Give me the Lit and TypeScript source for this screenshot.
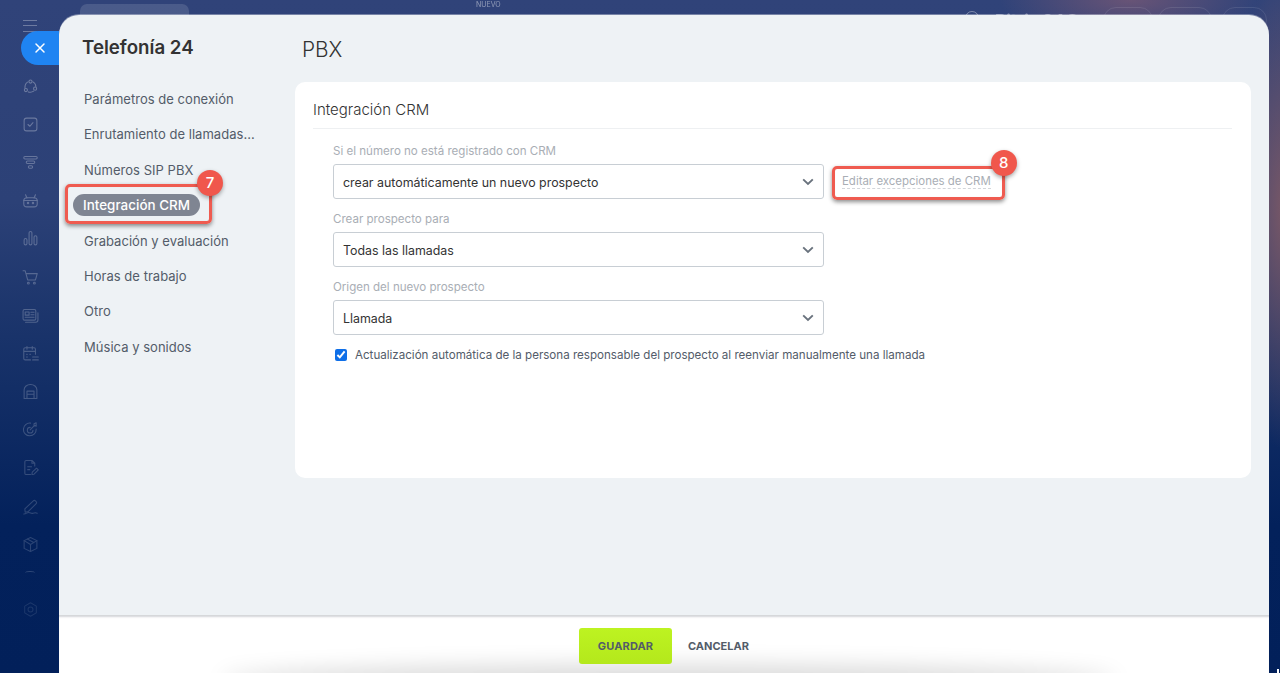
import { LitElement, html, css, svg } from "lit";
import { customElement } from "lit/decorators.js";

const chev = html`<svg class="chev" width="12" height="8" viewBox="0 0 12 8"><path d="M1.2 1.4 6 6l4.8-4.6" fill="none" stroke="#69727d" stroke-width="1.9"/></svg>`;

const icons = [
  svg`<circle cx="12" cy="5" r="2.2"/><circle cx="5.5" cy="17" r="2.2"/><circle cx="18.5" cy="15" r="2.2"/><path d="M8.5 5.5C5.5 7 4 10 4.2 14M9 19.6c2.5.8 5 .6 7.5-1M19.5 12c0-2.5-1.5-5-4-6.5"/>`,
  svg`<rect x="3" y="3" width="18" height="18" rx="3.5"/><path d="m8.5 12 2.5 2.500 4.500-5"/>`,
  svg`<rect x="2.5" y="3.5" width="19" height="3.5" rx="1.7"/><rect x="6" y="10" width="12" height="3.5" rx="1.7"/><rect x="9" y="16.5" width="6" height="3.5" rx="1.7"/>`,
  svg`<rect x="2.5" y="8" width="19" height="13" rx="4.5"/><path d="M7 8.500 5 4M17 8.500 19 4M2.500 12h19"/><circle cx="8.5" cy="15.500" r="1"/><circle cx="15.5" cy="15.500" r="1"/>`,
  svg`<rect x="3" y="12" width="4" height="9" rx="2"/><rect x="10" y="2" width="4" height="19" rx="2"/><rect x="17" y="8" width="4" height="13" rx="2"/>`,
  svg`<path d="M1.500 2.500h3l3.500 13h11l2.500-9H6"/><circle cx="9" cy="20" r="1.300"/><circle cx="17.5" cy="20" r="1.300"/>`,
  svg`<rect x="1.500" y="3.500" width="18" height="15" rx="2"/><path d="M22.500 8v10.500a3 3 0 0 1-3 3H5"/><rect x="4.5" y="7" width="5.500" height="4.500"/><path d="M12.500 7.500h4.500M12.500 11h4.500M4.500 14.500h12.500"/>`,
  svg`<path d="M12 21H4.500a2 2 0 0 1-2-2V6a2 2 0 0 1 2-2h12.500a2 2 0 0 1 2 2v7M2.500 9h16.500M7 2v4M14.500 2v4M15 17h8M15 21h8"/><path d="M6.500 13h1M11 13h1M6.500 17h1"/>`,
  svg`<path d="M3 22V9.500a9 7.500 0 0 1 18 0V22z"/><path d="M7 22V11.500h10V22M7 16h10"/>`,
  svg`<path d="M20 11.500A9 9 0 1 1 12 3"/><path d="M15.500 13a4 4 0 1 1-4-4M11.500 12.500 17 7M17 7V4l3-1.500V6l-3 1h3.500"/>`,
  svg`<path d="M18 10V6l-4-4H6a2 2 0 0 0-2 2v16a2 2 0 0 0 2 2h6M14 2v4h4M8 11h5.500M8 15h3"/><path d="m14 22 .5-3.500 6-5.500 2.500 2.500-6 6z"/>`,
  svg`<path d="m4 15.500 .5 4.500 4.500-1L20 8a2 2 0 0 0 0-3l-1-1a2 2 0 0 0-3 0z"/><path d="M2.500 22.500c4 0 4-2 7-2s3 2 6 1 4-1 6 0"/>`,
  svg`<path d="m12 2 9 4.500v11L12 22l-9-4.500v-11z"/><path d="m3 6.500 9 5.500 9-5.500M12 12v10M7.500 4.300l9 5"/>`,
];

@customElement("app-root")
export class AppRoot extends LitElement {
  static styles = css`
    :host {
      display: block;
      position: relative;
      width: 1280px;
      height: 673px;
      overflow: hidden;
      font-family: Inter, "Liberation Sans", sans-serif;
      background:
        radial-gradient(ellipse 130px 40px at 1130px 0, rgba(160, 100, 115, 0.5), transparent),
        radial-gradient(ellipse 60px 240px at 1285px 210px, rgba(130, 90, 100, 0.9), transparent),
        linear-gradient(180deg, #304379 0, #2c4177 30%, #19336a 50%, #03215b 78%, #02205a 100%);
    }
    .top {
      display: flex;
      align-items: flex-start;
      height: 15px;
      padding-left: 80px;
      color: rgba(255, 255, 255, 0.38);
      font-size: 13px;
      white-space: nowrap;
    }
    .tab { position: relative; height: 36px; line-height: 42px; flex: none; filter: blur(0.7px); }
    .t1 { width: 109px; margin-top: 4px; border-radius: 7px; background: rgba(255, 255, 255, 0.13); text-align: center; line-height: 34px; }
    .t2 { width: 188px; margin-left: 13px; }
    .t3 { width: 86px; }
    .t4 { width: 77px; }
    .t5 { width: 159px; }
    .t6 { width: 253px; }
    .search { width: 30px; flex: none; padding-top: 11px; }
    .search i { display: block; width: 12px; height: 12px; border: 1px solid rgba(255, 255, 255, 0.38); border-radius: 50%; }
    .t7 { width: 108px; font-weight: 700; font-size: 17px; }
    .nuevo { position: absolute; left: 0; top: -12px; line-height: 34px; font-size: 7px; color: rgba(255, 255, 255, 0.45); }
    .pill { height: 26px; margin: 7px 5px 0 0; box-sizing: border-box; border: 1px solid rgba(255, 255, 255, 0.1); border-radius: 13px; line-height: 28px; text-align: center; flex: none; }
    .p1 { width: 50px; }
    .p2 { width: 54px; margin-right: 10px; }
    .p3 { width: 45px; }
    .side { position: absolute; left: 0; top: 0; width: 59px; height: 673px; padding-top: 67px; box-sizing: border-box; display: flex; flex-direction: column; align-items: center; }
    .burger { position: absolute; left: 23px; top: 20px; width: 14px; height: 10px; border-top: 1px solid rgba(255, 255, 255, 0.3); border-bottom: 1px solid rgba(255, 255, 255, 0.3); }
    .burger::after { content: ""; display: block; height: 1px; margin-top: 4px; background: rgba(255, 255, 255, 0.3); }
    .close { position: absolute; left: 21px; top: 31px; width: 38px; height: 34px; border-radius: 17px 0 0 17px; background: #1f84f2; display: flex; align-items: center; justify-content: center; }
    .ico { height: 38.2px; flex: none; display: flex; align-items: center; justify-content: center; padding-left: 1px; }
    .ico svg { width: 17px; height: 17px; fill: none; stroke: #fff; stroke-width: 1.5; stroke-linecap: round; stroke-linejoin: round; }
    .ico.arc { height: 25px; }
    .arcline { width: 10px; height: 3px; margin-top: -6px; border-top: 1px solid rgba(255, 255, 255, 0.18); border-radius: 50%; }
    .ico.gear { margin-top: 2px; }
    .ico.gear svg { stroke-opacity: 0.1; }
    .cursor { position: absolute; left: 1277px; top: 669px; width: 2px; height: 4px; background: #fff; }

    .panel {
      position: absolute;
      left: 59px;
      top: 15px;
      width: 1210px;
      height: 658px;
      border-radius: 20px 20px 0 0;
      background: #eef2f5;
      display: flex;
      flex-direction: column;
      overflow: hidden;
      box-shadow: 0 -1px 0 rgba(255, 255, 255, 0.35);
    }
    .body { flex: 1; display: flex; min-height: 0; }
    .left { width: 236px; flex: none; padding-left: 24px; box-sizing: border-box; }
    .brand { margin: 0 0 0 -1px; height: 66.3px; padding-top: 17px; box-sizing: border-box; line-height: 32px; font-size: 18.7px; font-weight: 600; color: #333; }
    .nav { list-style: none; margin: 0; padding: 0; }
    .nav li { position: relative; height: 35.4px; display: flex; align-items: center; padding-left: 1px; font-size: 13px; letter-spacing: 0.03px; color: #535c69; white-space: nowrap; }
    .nav li.on { padding-left: 0; }
    .sel { position: relative; margin-left: -10px; height: 22px; padding: 0 10px; border-radius: 11px; background: #7f8592; color: #fff; font-weight: 500; line-height: 22px; font-size: 13.4px; }
    .mark { position: absolute; border: 3px solid #ef5b50; border-radius: 5px; box-shadow: 0 2px 4px rgba(0, 0, 0, 0.45), inset 0 0 1px rgba(0, 0, 0, 0.1); pointer-events: none; }
    .mark.m7 { left: -8px; right: -12px; top: -10px; bottom: -8px; }
    .mark.m8 { left: -10px; right: -14px; top: -8px; bottom: -12px; }
    .badge { position: absolute; width: 26px; height: 26px; border-radius: 50%; background: #f0574c; color: #fff; font-size: 15px; font-weight: 500; display: flex; align-items: center; justify-content: center; box-shadow: 0 2px 4px rgba(0, 0, 0, 0.35); }
    .m7 .badge { right: -14px; top: -17px; }
    .m8 .badge { right: -15px; top: -19px; }

    .main { flex: 1; min-width: 0; padding-right: 18px; }
    .pbx { margin: 0; height: 67px; padding: 2px 0 0 7px; box-sizing: border-box; display: flex; align-items: center; font-size: 20.8px; font-weight: 300; color: #333; }
    .card { height: 396px; border-radius: 10px; background: #fff; padding: 0 19px 0 18px; }
    .card h2 { margin: 0; height: 47px; padding-top: 9px; box-sizing: border-box; border-bottom: 1px solid #eef0f2; display: flex; align-items: center; font-size: 15px; font-weight: 300; color: #333; }
    .form { padding: 12px 0 0 20px; }
    .label { height: 18px; line-height: 20px; margin-bottom: 5px; font-size: 11.55px; color: #a9aeb5; }
    .row { display: flex; align-items: center; gap: 18px; margin-bottom: 11px; }
    .select { position: relative; width: 491px; height: 35px; margin-bottom: -1px; padding: 1px 9px 0; box-sizing: border-box; border: 1px solid #c8ced4; border-radius: 3px; display: flex; align-items: center; font-size: 12.4px; color: #333; }
    .chev { position: absolute; right: 9px; top: 13px; }
    .link { position: relative; font-size: 11.45px; line-height: 14px; color: #a9aeb5; border-bottom: 1px dashed #d3d6da; }
    .check { display: flex; align-items: center; gap: 8px; height: 20px; margin: 10px 0 0 2px; font-size: 11.58px; color: #535c69; }
    .check input { width: 12px; height: 12px; margin: 0; accent-color: #0f6fe8; }

    .foot { position: relative; flex: none; height: 58px; background: #fff; display: flex; align-items: flex-start; padding: 13px 0 0 520px; box-sizing: border-box; gap: 16px; overflow: hidden; box-shadow: inset 0 3px 2px -1px #d4d6d9; }
    .foot::after { content: ""; position: absolute; left: 170px; width: 880px; bottom: -14px; height: 14px; border-radius: 50%; box-shadow: 0 0 22px 8px rgba(0, 0, 0, 0.15); }
    .save { position: relative; z-index: 1; width: 93px; height: 36px; border: 0; border-radius: 3px; padding: 0; background: linear-gradient(#bdf321, #b4e81c); font: 700 11px Inter, "Liberation Sans", sans-serif; letter-spacing: 0.15px; color: #535c69; }
    .cancel { position: relative; z-index: 1; height: 36px; border: 0; padding: 0; background: none; font: 700 11px Inter, "Liberation Sans", sans-serif; color: #535c69; }
  `;

  render() {
    const nav = ["Parámetros de conexión", "Enrutamiento de llamadas...", "Números SIP PBX"];
    const nav2 = ["Grabación y evaluación", "Horas de trabajo", "Otro", "Música y sonidos"];
    return html`
      <div class="top">
        <div class="tab t1">Mensajería</div>
        <div class="tab t2">Comunicaciones</div>
        <div class="tab t3">Clientes</div>
        <div class="tab t4"><span class="nuevo">NUEVO</span>Marketing</div>
        <div class="tab t5">Configuración</div>
        <div class="tab t6">Automatización</div>
        <div class="search"><i></i></div>
        <div class="tab t7">Bitrix 24©</div>
        <div class="tab pill p1">Invitar</div>
        <div class="tab pill p2">Mi plan</div>
        <div class="tab pill p3">Ayuda</div>
      </div>
      <aside class="side">
        <div class="burger"></div>
        <div class="close"><svg width="12" height="12" viewBox="0 0 12 12"><path d="m2 2 8 8M10 2l-8 8" stroke="#fff" stroke-width="1.5" stroke-linecap="round"/></svg></div>
        ${icons.map((p, i) => html`<div class="ico" style="opacity:${(0.3 - i * 0.012).toFixed(3)}"><svg viewBox="0 0 24 24">${p}</svg></div>`)}
        <div class="ico arc"><div class="arcline"></div></div>
        <div class="ico gear"><svg viewBox="0 0 24 24"><path d="m12 2.5 8.2 4.700v9.600L12 21.500l-8.200-4.700V7.200z"/><circle cx="12" cy="12" r="3.5"/></svg></div>
      </aside>
      <section class="panel">
        <div class="body">
          <div class="left">
            <h1 class="brand">Telefonía 24</h1>
            <ul class="nav">
              ${nav.map((n) => html`<li>${n}</li>`)}
              <li class="on"><span class="sel">Integración CRM<span class="mark m7"><span class="badge">7</span></span></span></li>
              ${nav2.map((n) => html`<li>${n}</li>`)}
            </ul>
          </div>
          <div class="main">
            <h1 class="pbx">PBX</h1>
            <div class="card">
              <h2>Integración CRM</h2>
              <div class="form">
                <div class="label">Si el número no está registrado con CRM</div>
                <div class="row">
                  <div class="select">crear automáticamente un nuevo prospecto${chev}</div>
                  <span class="link">Editar excepciones de CRM<span class="mark m8"><span class="badge">8</span></span></span>
                </div>
                <div class="label">Crear prospecto para</div>
                <div class="row"><div class="select">Todas las llamadas${chev}</div></div>
                <div class="label">Origen del nuevo prospecto</div>
                <div class="row"><div class="select">Llamada${chev}</div></div>
                <label class="check"><input type="checkbox" checked />Actualización automática de la persona responsable del prospecto al reenviar manualmente una llamada</label>
              </div>
            </div>
          </div>
        </div>
        <footer class="foot">
          <button class="save">GUARDAR</button>
          <button class="cancel">CANCELAR</button>
        </footer>
      </section>
      <div class="cursor"></div>
    `;
  }
}
